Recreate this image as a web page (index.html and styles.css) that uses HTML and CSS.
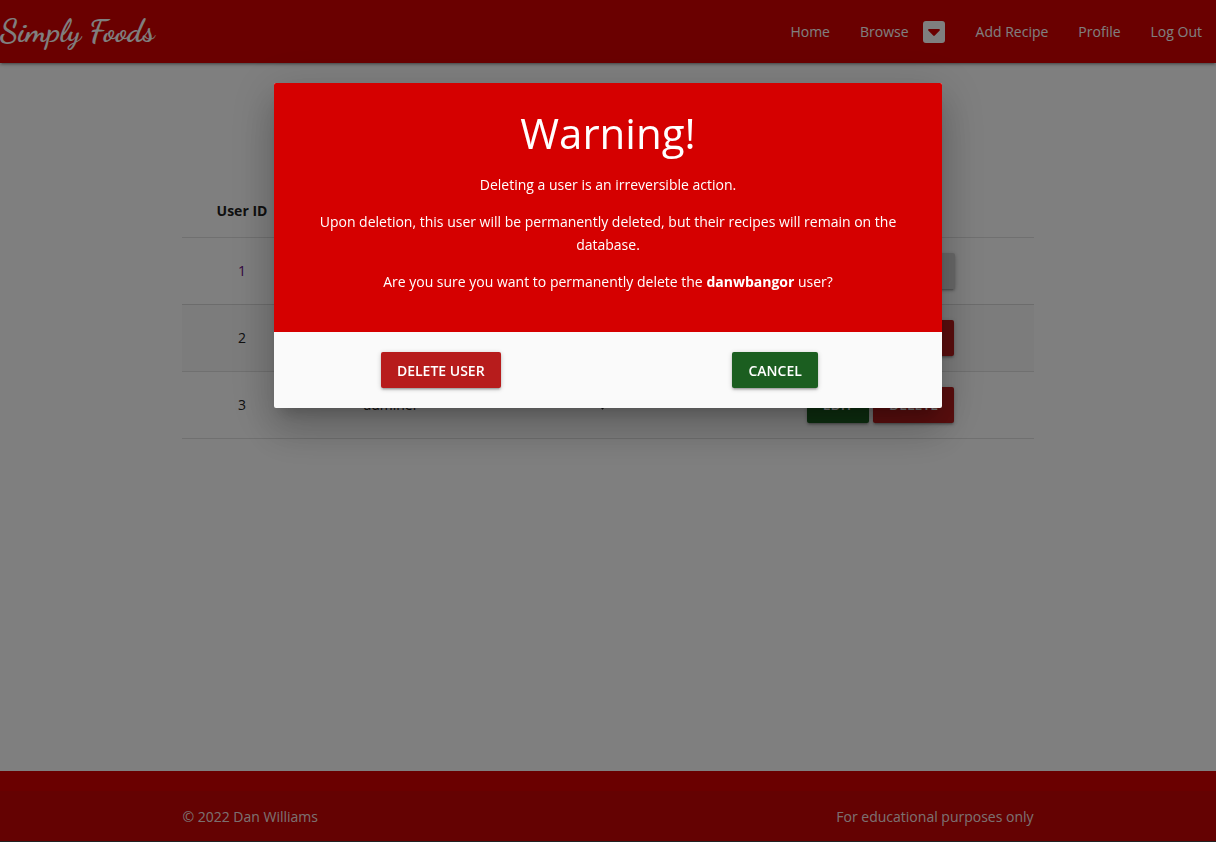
FILE: index.html
```html
<!DOCTYPE html>
<html lang="en">
<head>
<meta charset="utf-8">
<title>Simply Foods</title>
<link rel="stylesheet" href="styles.css">
</head>
<body>
<header class="nav">
  <a class="brand" href="#">Simply Foods</a>
  <nav class="links">
    <a href="#">Home</a>
    <a href="#" class="browse">Browse
      <svg width="24" height="24" viewBox="0 0 24 24" aria-hidden="true"><path fill="currentColor" fill-rule="evenodd" d="M4 1h16a3 3 0 0 1 3 3v16a3 3 0 0 1-3 3H4a3 3 0 0 1-3-3V4a3 3 0 0 1 3-3zM7 9c-.8 0-1.200.8-.7 1.400l4.900 5.100c.5.500 1.100.500 1.600 0l4.900-5.100c.5-.6.100-1.400-.7-1.400z"/></svg>
    </a>
    <a href="#">Add Recipe</a>
    <a href="#">Profile</a>
    <a href="#">Log Out</a>
  </nav>
</header>
<main class="main">
  <table class="users">
    <colgroup><col class="c-id"><col class="c-name"><col class="c-admin"><col class="c-act"></colgroup>
    <thead><tr><th>User ID</th><th></th><th></th><th></th></tr></thead>
    <tbody>
      <tr><td><a href="#" class="visited">1</a></td><td></td><td></td><td><span class="actions"><button class="btn blank" type="button" disabled aria-label="Delete"></button></span></td></tr>
      <tr><td>2</td><td></td><td></td><td><span class="actions"><button class="btn green" type="button">Edit</button><button class="btn red" type="button">Delete</button></span></td></tr>
      <tr><td>3</td><td>adminer</td><td><svg class="tick" width="12" height="12" viewBox="0 0 16 16" aria-hidden="true"><path d="M2 7l4 5 8-9" fill="none" stroke="currentColor" stroke-width="3"/></svg></td><td><span class="actions"><button class="btn green" type="button">Edit</button><button class="btn red" type="button">Delete</button></span></td></tr>
    </tbody>
  </table>
</main>
<footer class="footer">
  <div class="copyright"><div class="container"><span>© 2022 Dan Williams</span><span>For educational purposes only</span></div></div>
</footer>
<div class="overlay">
  <section class="modal" role="dialog" aria-modal="true" aria-labelledby="warning">
    <div class="modal-content">
      <h4 id="warning">Warning!</h4>
      <p>Deleting a user is an irreversible action.</p>
      <p>Upon deletion, this user will be permanently deleted, but their recipes will remain on the database.</p>
      <p>Are you sure you want to permanently delete the <strong>danwbangor</strong> user?</p>
    </div>
    <div class="modal-footer">
      <div><button class="btn red" type="button">Delete User</button></div>
      <div><button class="btn green" type="button">Cancel</button></div>
    </div>
  </section>
</div>
</body>
</html>
```
FILE: styles.css
```css
* { box-sizing: border-box; }
body {
  margin: 0;
  min-height: 100vh;
  display: flex;
  flex-direction: column;
  font-family: "Segoe UI", "Open Sans", "Noto Sans", sans-serif;
  font-size: 14px;
  line-height: 23px;
  color: #212121;
  background: #fff;
}
a { color: inherit; text-decoration: none; }
.nav {
  display: flex;
  justify-content: space-between;
  align-items: center;
  height: 63px;
  background: #d50000;
  color: #fff;
  box-shadow: 0 2px 2px rgba(0,0,0,.14), 0 3px 1px -2px rgba(0,0,0,.12), 0 1px 5px rgba(0,0,0,.2);
}
.brand {
  font-family: "Dancing Script", cursive;
  font-size: 32px;
  font-weight: bold;
  line-height: 63px;
}
.links { display: flex; gap: 30px; padding-right: 14px; }
.links a { display: flex; align-items: center; }
.browse { gap: 13px; }
.main { flex: 1; padding-top: 122px; }
.users {
  width: 70%;
  margin: 0 auto;
  border-collapse: collapse;
  table-layout: fixed;
  text-align: center;
}
.c-id { width: 14%; }
.c-name { width: 21%; }
.c-admin { width: 29%; }
.c-act { width: 36%; }
.users tr { border-bottom: 1px solid rgba(0,0,0,.12); }
.users th { height: 52px; padding: 0 5px; }
.users td { height: 67px; padding: 0 5px; }
.users tbody tr:nth-child(even) { background: rgba(242,242,242,.5); }
.users .visited { color: #6a0a80; }
.actions { display: flex; justify-content: center; gap: 4px; }
.tick { display: block; margin: 0 auto; }
.btn {
  height: 36px;
  padding: 0 16px;
  border: 0;
  border-radius: 2px;
  font-family: inherit;
  font-size: 14px;
  font-weight: 600;
  text-transform: uppercase;
  color: #fff;
  box-shadow: 0 2px 2px rgba(0,0,0,.14), 0 3px 1px -2px rgba(0,0,0,.12), 0 1px 5px rgba(0,0,0,.2);
}
.btn:disabled { background: #d2d2d2; }
.blank { width: 149px; }
.red { background: #b71c1c; }
.green { background: #1b5e20; }
.footer { padding-top: 20px; background: #d50000; color: #fff; border-bottom: 1px solid #444; }
.copyright { background: rgba(51,51,51,.08); color: rgba(255,255,255,.9); }
.container { width: 70%; height: 50px; margin: 0 auto; display: flex; justify-content: space-between; align-items: center; }
.overlay {
  position: fixed;
  inset: 0;
  padding-top: 83px;
  background: rgba(0,0,0,.5);
}
.modal {
  width: 55%;
  margin: 0 auto;
  border-radius: 2px;
  overflow: hidden;
  background: #fafafa;
  box-shadow: 0 24px 38px 3px rgba(0,0,0,.14), 0 9px 46px 8px rgba(0,0,0,.12), 0 11px 15px -7px rgba(0,0,0,.2);
}
.modal-content { padding: 24px 24px 39px; background: #d50000; color: #fff; text-align: center; }
.modal h4 { margin: 0 0 14px; font-size: 42px; line-height: 52px; font-weight: normal; }
.modal p { margin: 0 0 14px; }
.modal p:last-child { margin: 0; }
.modal-footer { display: grid; grid-template-columns: 1fr 1fr; padding: 20px 0; text-align: center; }
.modal-footer div { display: flex; justify-content: center; }
```
